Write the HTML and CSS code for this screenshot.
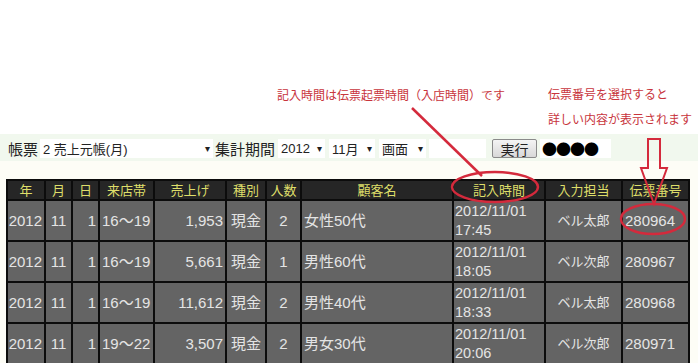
FILE: index.html
```html
<!DOCTYPE html>
<html lang="ja">
<head>
<meta charset="utf-8">
<link rel="stylesheet" href="styles.css">
</head>
<body>
<div class="page">
  <div class="top"></div>
  <div class="toolbar">
    <span class="label">帳票</span>
    <span class="sel w1"><span>2 売上元帳(月)</span><i class="caret">▾</i></span>
    <span class="label">集計期間</span>
    <span class="sel w2"><span>2012</span><i class="caret">▾</i></span>
    <span class="sel w3"><span>11月</span><i class="caret">▾</i></span>
    <span class="sel w4"><span>画面</span><i class="caret">▾</i></span>
    <span class="input"></span>
    <span class="btn">実行</span>
    <span class="dots">●●●●</span>
  </div>
  <div class="content">
    <table class="grid">
      <colgroup>
        <col style="width:38px"><col style="width:27px"><col style="width:27px"><col style="width:55px"><col style="width:72px"><col style="width:40px"><col style="width:35px"><col style="width:152px"><col style="width:92px"><col style="width:77px"><col style="width:67px">
      </colgroup>
      <thead>
        <tr><th>年</th><th>月</th><th>日</th><th>来店帯</th><th>売上げ</th><th>種別</th><th>人数</th><th>顧客名</th><th>記入時間</th><th>入力担当</th><th>伝票番号</th></tr>
      </thead>
      <tbody>
        <tr><td class="r">2012</td><td class="c">11</td><td class="r">1</td><td class="l">16〜19</td><td class="r">1,953</td><td class="c">現金</td><td class="c">2</td><td class="l">女性50代</td><td class="t">2012/11/01<br>17:45</td><td class="c s">ベル太郎</td><td class="l">280964</td></tr>
        <tr><td class="r">2012</td><td class="c">11</td><td class="r">1</td><td class="l">16〜19</td><td class="r">5,661</td><td class="c">現金</td><td class="c">1</td><td class="l">男性60代</td><td class="t">2012/11/01<br>18:05</td><td class="c s">ベル次郎</td><td class="l">280967</td></tr>
        <tr><td class="r">2012</td><td class="c">11</td><td class="r">1</td><td class="l">16〜19</td><td class="r">11,612</td><td class="c">現金</td><td class="c">2</td><td class="l">男性40代</td><td class="t">2012/11/01<br>18:33</td><td class="c s">ベル太郎</td><td class="l">280968</td></tr>
        <tr><td class="r">2012</td><td class="c">11</td><td class="r">1</td><td class="l">19〜22</td><td class="r">3,507</td><td class="c">現金</td><td class="c">2</td><td class="l">男女30代</td><td class="t">2012/11/01<br>20:06</td><td class="c s">ベル次郎</td><td class="l">280971</td></tr>
      </tbody>
    </table>
  </div>

  <div class="note n1">記入時間は伝票起票時間（入店時間）です</div>
  <div class="note n2">伝票番号を選択すると<br>詳しい内容が表示されます</div>
  <svg class="marks" width="698" height="363" viewBox="0 0 698 363">
    <line x1="412" y1="108" x2="482" y2="176" stroke="#d42a3c" stroke-width="2.5"/>
    <ellipse cx="495" cy="187" rx="43" ry="15" fill="none" stroke="#d42a3c" stroke-width="2.5"/>
    <ellipse cx="653" cy="219" rx="32" ry="15" fill="none" stroke="#d42a3c" stroke-width="2.5"/>
    <polygon points="648,139 660,139 660,168 667,168 654,204 641,168 648,168" fill="none" stroke="#d42a3c" stroke-width="2"/>
  </svg>
</div>
</body>
</html>
```

FILE: styles.css
```css
html, body {
  margin: 0;
  padding: 0;
  background: #ffffff;
}
.page {
  position: relative;
  width: 698px;
  height: 363px;
  overflow: hidden;
  background: #fdfdf6;
  font-family: "Liberation Sans", "Noto Sans CJK JP", sans-serif;
}
.top {
  height: 134px;
  background: #ffffff;
}
.toolbar {
  height: 27px;
  background: #f1f8ee;
  display: flex;
  align-items: center;
  padding-left: 8px;
  gap: 2px;
  box-sizing: border-box;
  padding-top: 2px;
}
.label {
  font-size: 15px;
  color: #222;
}
.sel {
  height: 19px;
  background: #fff;
  display: flex;
  align-items: center;
  justify-content: space-between;
  box-sizing: border-box;
  padding: 0 3px;
  font-size: 13px;
  color: #222;
}
.caret {
  font-style: normal;
  font-size: 10px;
  color: #222;
}
.w1 { width: 173px; }
.w2 { width: 47px; margin-left: 1px; }
.w3 { width: 46px; margin-left: 2px; }
.w4 { width: 47px; margin-left: 2px; }
.input {
  width: 57px;
  height: 19px;
  background: #fff;
  margin-left: 1px;
}
.btn {
  width: 45px;
  height: 19px;
  box-sizing: border-box;
  margin-left: 4px;
  border: 1px solid #8a8a8a;
  border-radius: 2px;
  background: linear-gradient(#f4f4f4, #d8d8d8);
  font-size: 14px;
  color: #222;
  display: flex;
  align-items: center;
  justify-content: center;
}
.dots {
  width: 71px;
  height: 19px;
  background: #fff;
  margin-left: 1px;
  font-family: "Noto Sans CJK JP", sans-serif;
  font-size: 15px;
  color: #000;
  letter-spacing: -1px;
  display: flex;
  align-items: center;
  padding-left: 2px;
  box-sizing: border-box;
}
.content {
  padding: 18px 0 0 6px;
}
.grid {
  border-collapse: collapse;
  table-layout: fixed;
  width: 684px;
}
.grid th, .grid td {
  border: 2px solid #0c0c0c;
  padding: 0;
  overflow: hidden;
  white-space: nowrap;
}
.grid th {
  height: 18px;
  background: #262626;
  color: #dede6a;
  font-weight: normal;
  font-size: 13px;
  text-align: center;
  line-height: 17px;
}
.grid td {
  height: 39px;
  background: #646464;
  color: #e4e4e4;
  font-size: 15px;
  line-height: 19px;
}
.grid td.r { text-align: right; padding-right: 2px; }
.grid td.c { text-align: center; }
.grid td.l { text-align: left; padding-left: 2px; }
.grid td.t { text-align: left; padding-left: 1px; font-size: 14.5px; }
.grid td.s { font-size: 13px; }
.note {
  position: absolute;
  color: #c8343c;
  font-size: 12px;
  line-height: 24px;
  white-space: nowrap;
  font-family: "Noto Sans CJK JP", sans-serif;
}
.n1 { left: 277px; top: 83px; }
.n2 { left: 548px; top: 81px; line-height: 25px; }
.marks {
  position: absolute;
  left: 0;
  top: 0;
  pointer-events: none;
}
```
